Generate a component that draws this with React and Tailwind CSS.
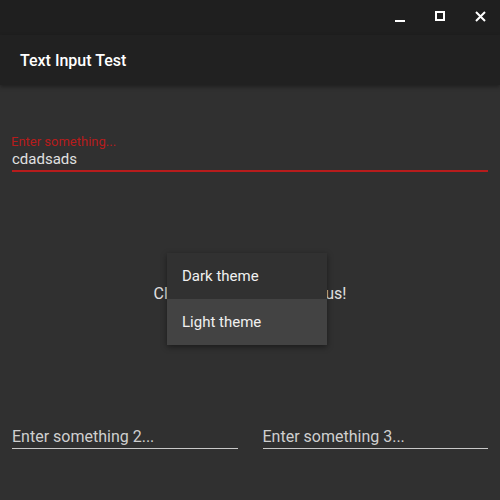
import React from "react";

function TitleBar() {
  return (
    <div className="flex h-[35px] items-center justify-end bg-[#1f1f1f]">
      <svg width="500" height="35" className="block">
        <rect x="395" y="20" width="10" height="2" fill="#ffffff" />
        <rect x="436" y="12" width="8" height="8" fill="none" stroke="#ffffff" strokeWidth="2" />
        <path d="M476 12 L485 21 M485 12 L476 21" stroke="#ffffff" strokeWidth="2" />
      </svg>
    </div>
  );
}

export default function App() {
  return (
    <div
      className="relative flex h-[500px] w-[500px] flex-col overflow-hidden bg-[#303030]"
      style={{ fontFamily: "Roboto, 'Liberation Sans', sans-serif" }}
    >
      <TitleBar />

      <header className="relative z-10 flex h-[50px] items-center bg-[#212121] px-5 shadow-[0_2px_4px_rgba(0,0,0,0.35)]">
        <h1 className="pt-[1px] text-[16px] font-medium text-white">Text Input Test</h1>
      </header>

      <main className="flex flex-1 flex-col px-3">
        <div className="pt-[49px]">
          <div className="-ml-[1px] text-[13px] leading-[15px] text-[#b71c1c]">
            Enter something...
          </div>
          <div className="h-[20px] text-[15px] leading-[20px] text-[#e0e0e0]">cdadsads</div>
          <div className="mt-[1px] h-[2px] bg-[#b71c1c]" />
        </div>

        <p className="mt-[112px] text-center text-[16px] leading-[20px] text-[#e0e0e0]">
          Click here to remove focus!
        </p>

        <div className="mt-[123px] grid grid-cols-2 gap-[25px]">
          <div>
            <div className="text-[16px] leading-[20px] text-[#cfcfcf]">Enter something 2...</div>
            <div className="mt-[1px] h-[1px] bg-[#c8c8c8]" />
          </div>
          <div>
            <div className="text-[16px] leading-[20px] text-[#cfcfcf]">Enter something 3...</div>
            <div className="mt-[1px] h-[1px] bg-[#c8c8c8]" />
          </div>
        </div>
      </main>

      <div className="absolute left-[167px] top-[253px] w-[160px] bg-[#313131] shadow-[0_2px_6px_rgba(0,0,0,0.45)]">
        <div className="flex h-[46px] items-center pl-[15px] text-[15px] text-[#f0f0f0]">Dark theme</div>
        <div className="flex h-[46px] items-center bg-[#434343] pl-[15px] text-[15px] text-[#f0f0f0]">
          Light theme
        </div>
      </div>
    </div>
  );
}
